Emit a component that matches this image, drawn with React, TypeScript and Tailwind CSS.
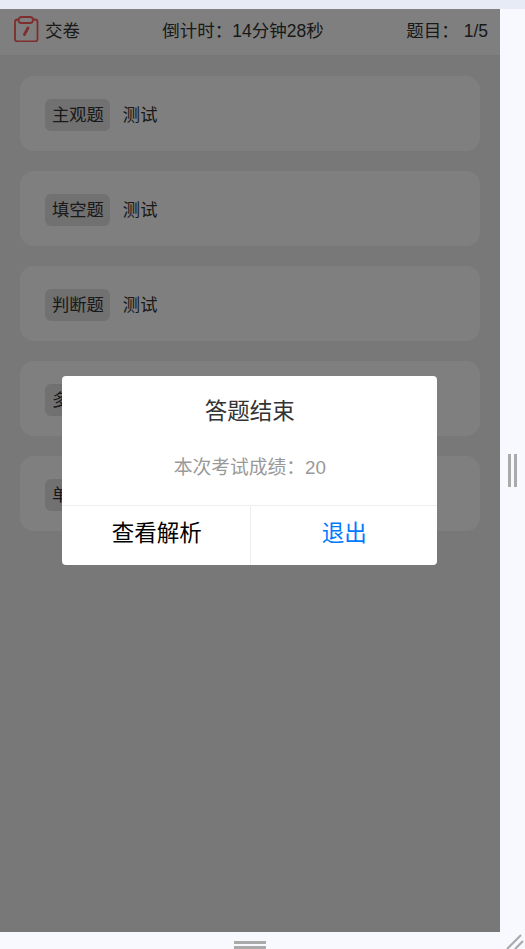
const questions = ["主观题", "填空题", "判断题", "多选题", "单选题"];

function PaperIcon() {
  return (
    <svg width="26" height="26" viewBox="0 0 26 26" fill="none" className="shrink-0 mt-[-4px]">
      <path
        d="M6 3.500H4.500a2.500 2.500 0 0 0-2.500 2.500v17a2.500 2.500 0 0 0 2.500 2.500h17.500a2.500 2.500 0 0 0 2.500-2.500V6a2.500 2.500 0 0 0-2.500-2.500h-2"
        stroke="#ff5a5a"
        strokeWidth="1.800"
      />
      <rect x="5.500" y="1" width="14.500" height="6" rx="3" stroke="#ff5a5a" strokeWidth="1.800" />
      <path d="M15 12l-3.600 6.500" stroke="#ff5a5a" strokeWidth="2.800" strokeLinecap="round" />
    </svg>
  );
}

export default function App() {
  return (
    <div className="w-[525px] h-[949px] overflow-hidden flex flex-col bg-[#f8f9ff] font-['Liberation_Sans','Noto_Sans_CJK_SC',sans-serif]">
      <div className="h-[9px] bg-[#e6ebf5]"></div>

      <div className="flex h-[923px]">
        {/* Phone screen */}
        <div className="relative w-[500px] bg-[#f0f0f0]">
          <header className="h-[46px] bg-white flex items-center justify-between pl-[13px] pr-[12px] pb-[2px] text-[17.5px] text-[#333333]">
            <div className="flex items-center gap-[6px]">
              <PaperIcon />
              <span>交卷</span>
            </div>
            <span>倒计时：14分钟28秒</span>
            <div className="flex gap-[5px]">
              <span>题目：</span>
              <span>1/5</span>
            </div>
          </header>

          <div className="flex flex-col gap-5 px-5 pt-[21px]">
            {questions.map((q) => (
              <div key={q} className="h-[75px] bg-white rounded-[14px] flex items-center pl-[25px] pt-[3px]">
                <span className="h-[32px] pl-[7px] pr-[6px] pt-[2px] flex items-center rounded-[6px] bg-[#e2e2e2] text-[17.3px] text-[#333333]">
                  {q}
                </span>
                <span className="ml-[13px] pt-[2px] text-[17.3px] text-[#333333]">测试</span>
              </div>
            ))}
          </div>

          {/* Mask and result dialog */}
          <div className="absolute inset-0 bg-black/50 flex justify-center">
            <div className="mt-[367px] ml-[-0.25px] w-[375px] h-[189px] bg-white rounded-[4px] flex flex-col">
              <h2 className="pt-[21px] text-center text-[22.5px] leading-[30px] text-[#333333]">答题结束</h2>
              <p className="mt-[27px] text-center text-[18.75px] leading-[28px] text-[#999999]">本次考试成绩：20</p>
              <div className="mt-auto h-[60px] flex border-t border-[#eeeeee] text-[22.5px]">
                <button className="w-[188px] pl-[1px] pb-[3px] text-black">查看解析</button>
                <button className="flex-1 pb-[3px] border-l border-[#eeeeee] text-[#007aff]">退出</button>
              </div>
            </div>
          </div>
        </div>

        {/* Side resize handle */}
        <div className="flex-1 flex justify-center pt-[445px] pr-[1px]">
          <div className="w-[9px] h-[33px] border-x-[3px] border-[#aaaaaa]"></div>
        </div>
      </div>

      {/* Bottom resize handle */}
      <div className="relative flex-1 flex justify-center pt-[9px] pr-[25px]">
        <div className="w-[32px] h-[8px] border-y-[3px] border-[#aaaaaa]"></div>
        <svg width="20" height="17" viewBox="0 0 20 17" className="absolute right-0 bottom-0">
          <path d="M2 17L16 3M10 17L18 9" stroke="#aaaaaa" strokeWidth="2.200" fill="none" />
        </svg>
      </div>
    </div>
  );
}
